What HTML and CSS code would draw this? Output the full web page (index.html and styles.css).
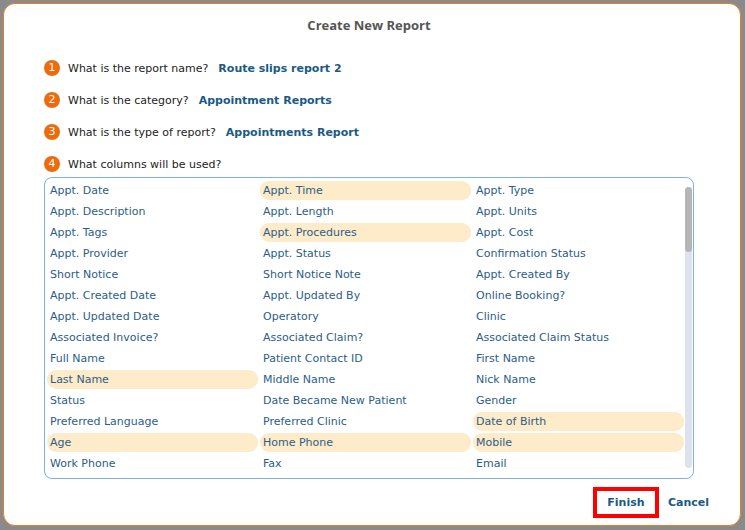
FILE: index.html
```html
<!DOCTYPE html>
<html lang="en">
<head>
    <meta charset="UTF-8">
    <title>Create New Report</title>
    <link rel="stylesheet" href="styles.css">
</head>
<body>
    <div class="dialog">
        <h1 class="title">Create New Report</h1>

        <ul class="steps">
            <li class="step"><span class="badge">1</span><span>What is the report name?</span><b class="answer">Route slips report 2</b></li>
            <li class="step"><span class="badge">2</span><span>What is the category?</span><b class="answer">Appointment Reports</b></li>
            <li class="step"><span class="badge">3</span><span>What is the type of report?</span><b class="answer">Appointments Report</b></li>
            <li class="step"><span class="badge">4</span><span>What columns will be used?</span></li>
        </ul>

        <div class="columns-box">
            <div class="columns" id="columns"></div>
            <div class="scroll-track"><div class="scroll-thumb"></div></div>
        </div>

        <div class="actions">
            <a href="#" class="btn btn-finish">Finish</a>
            <a href="#" class="btn">Cancel</a>
        </div>
    </div>

    <script>
        // * = column already picked
        const fields = [
            'Appt. Date', '*Appt. Time', 'Appt. Type',
            'Appt. Description', 'Appt. Length', 'Appt. Units',
            'Appt. Tags', '*Appt. Procedures', 'Appt. Cost',
            'Appt. Provider', 'Appt. Status', 'Confirmation Status',
            'Short Notice', 'Short Notice Note', 'Appt. Created By',
            'Appt. Created Date', 'Appt. Updated By', 'Online Booking?',
            'Appt. Updated Date', 'Operatory', 'Clinic',
            'Associated Invoice?', 'Associated Claim?', 'Associated Claim Status',
            'Full Name', 'Patient Contact ID', 'First Name',
            '*Last Name', 'Middle Name', 'Nick Name',
            'Status', 'Date Became New Patient', 'Gender',
            'Preferred Language', 'Preferred Clinic', '*Date of Birth',
            '*Age', '*Home Phone', '*Mobile',
            'Work Phone', 'Fax', 'Email'
        ];

        const list = document.getElementById('columns');
        fields.forEach(name => {
            const item = document.createElement('div');
            item.className = 'col-item';
            if (name[0] === '*') {
                item.classList.add('selected');
                name = name.slice(1);
            }
            item.textContent = name;
            list.appendChild(item);
        });
    </script>
</body>
</html>
```

FILE: styles.css
```css
body {
    margin: 0;
    background-color: #8a8a8a;
    font-family: "DejaVu Sans", Verdana, sans-serif;
    font-size: 11px;
}

.dialog {
    box-sizing: border-box;
    height: 523px;
    margin: 3px 4px 0 3px;
    padding: 0 46px 0 40px;
    background-color: white;
    border: 1px solid #f07c1d;
    border-radius: 12px;
}

.title {
    margin: 0;
    padding: 13px 0 18px;
    text-align: center;
    font-family: "Open Sans", Lato, sans-serif;
    font-size: 13px;
    font-weight: bold;
    color: #555;
    line-height: 17px;
}

.steps {
    list-style: none;
    margin: 0;
    padding: 0;
}

.step {
    display: flex;
    align-items: center;
    height: 32px;
    color: #222;
}

.badge {
    width: 16px;
    height: 16px;
    margin-right: 8px;
    border-radius: 50%;
    background-color: #ec6b0c;
    color: white;
    font-size: 11px;
    line-height: 16px;
    text-align: center;
}

.answer {
    margin-left: 10px;
    color: #1b5a85;
}

.columns-box {
    position: relative;
    margin-top: -3px;
    border: 1px solid #7cb2ea;
    border-radius: 8px;
    overflow: hidden;
}

.columns {
    height: 300px;
    overflow: hidden;
    padding: 3px 2px 0 2px;
    box-sizing: border-box;
    display: grid;
    grid-template-columns: repeat(3, 211px);
    grid-auto-rows: 19px;
    gap: 2px 2px;
}

.scroll-track {
    position: absolute;
    top: 9px;
    bottom: 10px;
    left: 640px;
    width: 7px;
    border-radius: 4px;
    background-color: #dde2ee;
}

.scroll-thumb {
    height: 65px;
    border-radius: 4px;
    background-color: #b6b6b6;
}

.col-item {
    padding-left: 3px;
    line-height: 19px;
    color: #2c5d88;
    border-radius: 9px;
    white-space: nowrap;
}

.col-item.selected {
    background-color: #fdebc9;
}

.actions {
    display: flex;
    justify-content: flex-end;
    align-items: center;
    gap: 5px;
    margin: 8px -19px 0 0;
}

.btn {
    padding: 0 4px;
    color: #1b5a85;
    font-weight: bold;
    text-decoration: none;
    line-height: 23px;
}

.btn-finish {
    width: 58px;
    text-align: center;
    padding: 0;
    border: 4px solid red;
}
```
